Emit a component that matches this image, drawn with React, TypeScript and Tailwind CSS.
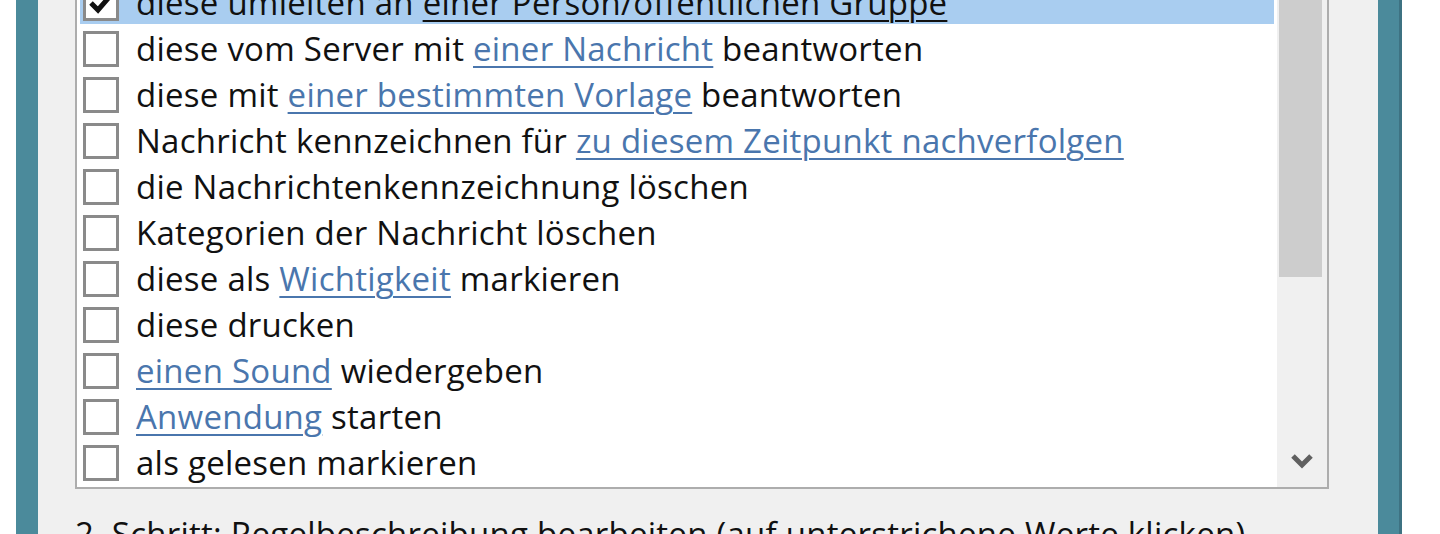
import React from 'react';

type Part = { text: string; link?: boolean };

const rows: { parts: Part[]; checked?: boolean }[] = [
  { checked: true, parts: [{ text: 'diese umleiten an ' }, { text: 'einer Person/öffentlichen Gruppe', link: true }] },
  { parts: [{ text: 'diese vom Server mit ' }, { text: 'einer Nachricht', link: true }, { text: ' beantworten' }] },
  { parts: [{ text: 'diese mit ' }, { text: 'einer bestimmten Vorlage', link: true }, { text: ' beantworten' }] },
  { parts: [{ text: 'Nachricht kennzeichnen für ' }, { text: 'zu diesem Zeitpunkt nachverfolgen', link: true }] },
  { parts: [{ text: 'die Nachrichtenkennzeichnung löschen' }] },
  { parts: [{ text: 'Kategorien der Nachricht löschen' }] },
  { parts: [{ text: 'diese als ' }, { text: 'Wichtigkeit', link: true }, { text: ' markieren' }] },
  { parts: [{ text: 'diese drucken' }] },
  { parts: [{ text: 'einen Sound', link: true }, { text: ' wiedergeben' }] },
  { parts: [{ text: 'Anwendung', link: true }, { text: ' starten' }] },
  { parts: [{ text: 'als gelesen markieren' }] },
];

const Checkbox: React.FC<{ checked?: boolean }> = ({ checked }) => (
  <div className="mt-[7px] h-[36px] w-[36px] shrink-0 border-[3px] border-[#8a8a8a] bg-white flex items-center justify-center">
    {checked && (
      <svg width="26" height="22" viewBox="0 0 26 22">
        <path d="M3 11 L10 18 L23 3" fill="none" stroke="#111" strokeWidth="5" />
      </svg>
    )}
  </div>
);

export default function App() {
  return (
    <div className="flex h-[534px] w-[1440px] overflow-hidden bg-white font-['Open_Sans','Noto_Sans',sans-serif] text-[33px] tracking-[0.25px] text-[#111]">
      <div className="w-[16px] shrink-0 bg-white" />
      <div className="w-[22px] shrink-0 bg-[#4b8a9b]" />

      <div className="w-[1340px] shrink-0 bg-[#f0f0f0] pl-[37px] pr-[49px]">
        {/* rule actions list */}
        <div className="-mt-[27px] flex border-2 border-[#adadad] bg-white">
          <div className="w-[1197px] py-[3px] pl-[3px]">
            {rows.map((row, i) => (
              <div
                key={i}
                className={`flex h-[46px] items-start pl-[3px] ${row.checked ? 'bg-[#a9cdf0]' : ''}`}
              >
                <Checkbox checked={row.checked} />
                <span className="ml-[17px] mt-[2px] whitespace-nowrap leading-[46px]">
                  {row.parts.map((p, j) =>
                    p.link ? (
                      <span
                        key={j}
                        className={`underline decoration-2 underline-offset-[5px] ${row.checked ? 'text-[#111] decoration-[#111]' : 'text-[#4a76ad] decoration-[#4a76ad]'}`}
                      >
                        {p.text}
                      </span>
                    ) : (
                      <span key={j}>{p.text}</span>
                    )
                  )}
                </span>
              </div>
            ))}
          </div>

          {/* scrollbar */}
          <div className="ml-[3px] flex w-[50px] shrink-0 flex-col bg-[#f0f0f0]">
            <div className="ml-[2px] mr-[5px] h-[302px] bg-[#cdcdcd]" />
            <div className="flex-1" />
            <div className="flex h-[46px] items-center justify-center pb-[6px]">
              <svg width="24" height="16" viewBox="0 0 24 16">
                <path d="M3 3 L12 12 L21 3" fill="none" stroke="#606060" strokeWidth="5" />
              </svg>
            </div>
          </div>
        </div>

        <p className="mt-[22px] whitespace-nowrap leading-[46px]">
          2. Schritt: Regelbeschreibung bearbeiten (auf unterstrichene Werte klicken)
        </p>
      </div>

      <div className="w-[24px] shrink-0 border-r-[3px] border-[#3e7282] bg-[#4b8a9b]" />
      <div className="flex-1 bg-white" />
    </div>
  );
}
